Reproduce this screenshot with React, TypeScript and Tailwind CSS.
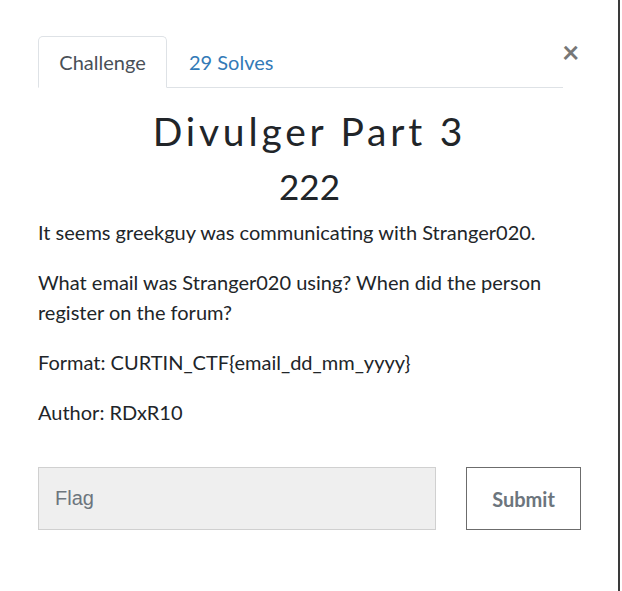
import React from "react";

export default function App() {
  return (
    <div className="h-[591px] w-[622px] overflow-hidden bg-white">
      <div
        className="relative h-[591px] w-[620px] border-r-2 border-[#3a3a3a] text-[#212529]"
        style={{ fontFamily: "Lato, 'Open Sans', sans-serif" }}
      >
        <div className="pl-[38px] pt-[36px]">
          {/* tabs */}
          <div className="flex w-[525px] border-b border-[#dee2e6]">
            <div className="-mb-px flex h-[52px] w-[129px] items-center justify-center rounded-t-[5px] border border-b-white border-[#dee2e6] bg-white text-[20px] text-[#495057]">
              Challenge
            </div>
            <div className="flex h-[51px] items-center px-[22px] text-[20px] text-[#337ab7]">29 Solves</div>
          </div>
          <button className="absolute left-[562px] top-[36px] text-[30px] font-bold leading-none text-[#777]">
            ×
          </button>

          {/* title */}
          <div className="w-[543px] text-center">
            <h3 className="mt-[20px] text-[39px] leading-[47px] tracking-[3.8px]">Divulger Part 3</h3>
            <h4 className="mt-[10px] text-[35px] leading-[42px]">222</h4>
          </div>

          {/* description */}
          <div className="mt-[10px] w-[543px] text-[20px] leading-[30px]">
            <p className="mb-[20px]">It seems greekguy was communicating with Stranger020.</p>
            <p className="mb-[20px]">
              What email was Stranger020 using? When did the person register on the forum?
            </p>
            <p className="mb-[20px]">Format: CURTIN_CTF{"{"}email_dd_mm_yyyy{"}"}</p>
            <p>Author: RDxR10</p>
          </div>

          {/* flag form */}
          <div className="mt-[40px] flex gap-[30px]">
            <input
              placeholder="Flag"
              className="h-[63px] w-[398px] border border-[#d0d0d0] bg-[#efefef] px-[16px] text-[20px] text-[#495057] outline-none placeholder:text-[#6c757d]"
              style={{ fontFamily: "'Liberation Sans', Arial, sans-serif" }}
            />
            <button className="h-[63px] w-[115px] border border-[#6c6c6c] bg-white text-[20px] font-bold text-[#6c757d]">
              Submit
            </button>
          </div>
        </div>
      </div>
    </div>
  );
}
